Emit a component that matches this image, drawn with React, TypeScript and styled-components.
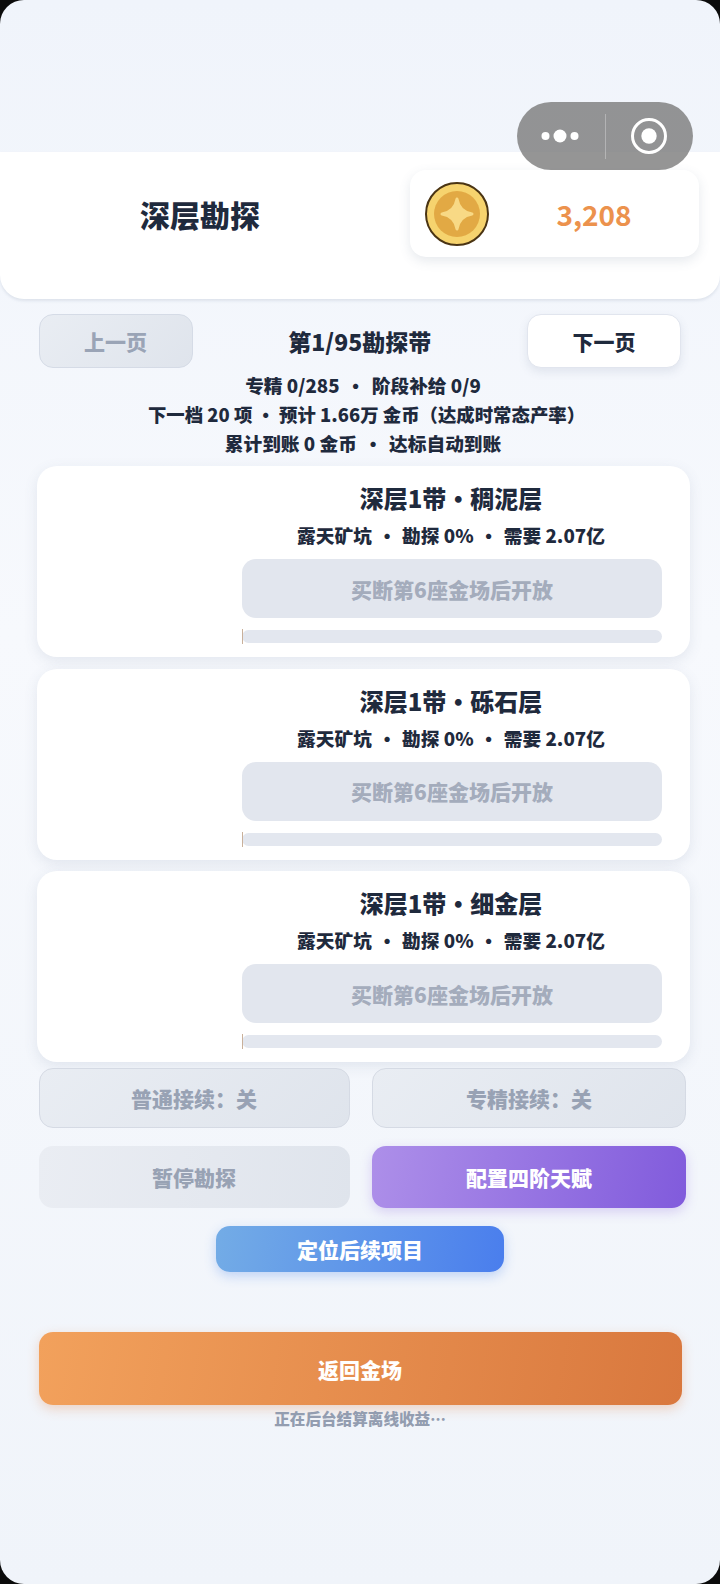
import styled, { createGlobalStyle } from 'styled-components'

const Global = createGlobalStyle`
  html, body { margin: 0; padding: 0; background: #0b0b0b; }
  * { box-sizing: border-box; }
`

const Screen = styled.div`
  position: relative;
  width: 720px;
  height: 1584px;
  overflow: hidden;
  border-radius: 24px;
  background: linear-gradient(180deg, #f0f4fb 0%, #f7f9fd 40%, #f0f4fa 100%);
  font-family: "Noto Sans CJK SC", "Noto Sans", sans-serif;
  font-weight: 900;
  color: #1f2a3d;
  padding-top: 152px;
`

const Capsule = styled.div`
  position: absolute;
  left: 517px;
  top: 102px;
  width: 176px;
  height: 68px;
  border-radius: 34px;
  background: rgba(122, 122, 122, 0.8);
  display: flex;
  align-items: center;
  z-index: 2;
`

const CapsuleSide = styled.div`
  flex: 1;
  height: 100%;
  display: flex;
  align-items: center;
  justify-content: center;
`

const CapsuleLine = styled.div`
  width: 1px;
  height: 45px;
  background: rgba(255, 255, 255, 0.3);
`

const Header = styled.header`
  height: 147px;
  background: #ffffff;
  border-radius: 0 0 24px 24px;
  box-shadow: 0 2px 3px rgba(90, 110, 140, 0.14);
  display: flex;
  padding: 18px 21px 0 0;
`

const Title = styled.h1`
  margin: 0;
  width: 400px;
  height: 88px;
  font-size: 30px;
  font-weight: 900;
  line-height: 88px;
  text-align: center;
`

const CoinPanel = styled.div`
  width: 289px;
  height: 87px;
  margin-left: 10px;
  border-radius: 16px;
  background: #fff;
  box-shadow: 0 4px 12px rgba(80, 100, 130, 0.14);
  display: flex;
  align-items: center;
  padding-left: 15px;
`

const Amount = styled.div`
  flex: 1;
  text-align: center;
  font-size: 28px;
  font-weight: 700;
  color: #ec924d;
`

const Content = styled.main`
  padding: 15px 30px 0 37px;
`

const Pager = styled.div`
  display: flex;
  align-items: center;
  justify-content: space-between;
  padding: 0 9px 0 1.5px;
`

const PageButton = styled.div<{ $off?: boolean }>`
  width: 154px;
  height: 54px;
  border-radius: 14px;
  font-size: 21px;
  display: flex;
  align-items: center;
  justify-content: center;
  border: 1px solid ${p => (p.$off ? '#d5dbe6' : '#e1e5ee')};
  color: ${p => (p.$off ? '#9aa4b6' : '#1f2a3d')};
  background: ${p => (p.$off ? 'linear-gradient(135deg, #e9edf3, #dfe4ec)' : '#fff')};
  box-shadow: ${p => (p.$off ? 'none' : '0 4px 10px rgba(80, 100, 130, 0.12)')};
`

const PageLabel = styled.div`
  font-size: 23px;
`

const Stats = styled.div`
  margin-top: 2px;
  padding-right: 1px;
  text-align: center;
  font-size: 18.7px;
  line-height: 29px;
  white-space: pre;
`

const TightLine = styled.span`
  font-size: 18.4px;
  line-height: 1;
  margin-left: 7px;
`

const Sep = styled.span<{ $gap: number }>`
  margin: 0 ${p => p.$gap}px;
`

const Card = styled.section`
  margin-top: 9px;
  height: 191px;
  border-radius: 20px;
  background: #fff;
  box-shadow: 0 4px 14px rgba(80, 100, 130, 0.12);
  display: flex;
  flex-direction: column;
  align-items: flex-end;
  padding: 13px 28px 0 0;
  & + & {
    margin-top: 11.5px;
  }
`

const CardBody = styled.div`
  width: 420px;
  display: flex;
  flex-direction: column;
  align-items: center;
`

const CardTitle = styled.div`
  font-size: 24px;
  line-height: 38px;
  padding-right: 2px;
`

const CardInfo = styled.div`
  font-size: 18.7px;
  line-height: 30px;
  margin-top: 3px;
  padding-right: 2px;
  white-space: pre;
`

const LockedButton = styled.div`
  width: 100%;
  height: 59px;
  margin-top: 9px;
  border-radius: 14px;
  background: #e2e6ee;
  color: #a4acbc;
  font-size: 21px;
  display: flex;
  align-items: center;
  justify-content: center;
`

const Track = styled.div`
  width: 100%;
  height: 13px;
  margin-top: 12px;
  border-radius: 7px;
  background: #e3e7ef;
  display: flex;
  align-items: center;
`

const TrackFill = styled.div`
  width: 1px;
  height: 15px;
  background: #c9b09a;
`

const Grid = styled.div<{ $top: number }>`
  display: grid;
  grid-template-columns: 311px 314px;
  column-gap: 22.5px;
  padding-left: 1.5px;
  margin-top: ${p => p.$top}px;
`

const Toggle = styled.div`
  height: 60px;
  border-radius: 14px;
  border: 1px solid #d5dae4;
  background: linear-gradient(135deg, #e9edf3, #dfe4ec);
  color: #98a2b4;
  font-size: 21px;
  display: flex;
  align-items: center;
  justify-content: center;
`

const Action = styled.div<{ $from: string; $to: string; $glow: string; $light?: boolean }>`
  height: 62px;
  border-radius: 14px;
  background: linear-gradient(100deg, ${p => p.$from}, ${p => p.$to});
  color: ${p => (p.$light ? '#fff' : '#98a2b4')};
  box-shadow: 0 4px 12px ${p => p.$glow};
  font-size: 21px;
  display: flex;
  align-items: center;
  justify-content: center;
`

const Locate = styled(Action)`
  width: 288px;
  height: 46px;
  margin: 18px 0 0 179px;
`

const Back = styled(Action)`
  width: 643px;
  height: 73px;
  margin: 60px 0 0 1.5px;
`

const Note = styled.div`
  margin-top: 2px;
  padding-right: 7px;
  text-align: center;
  color: #939db0;
  font-size: 15.6px;
  line-height: 22px;
`

const Coin = () => (
  <svg width="64" height="64" viewBox="0 0 64 64">
    <circle cx="32" cy="32" r="31" fill="#f6d36e" stroke="#4a3413" strokeWidth="2" />
    <circle cx="32" cy="32" r="23" fill="#e2a944" />
    <path d="M32 17C33.5 26 38 30.5 47 32C38 33.5 33.5 38 32 47C30.5 38 26 33.5 17 32C26 30.5 30.5 26 32 17Z" fill="#f8d985" stroke="#f8d985" strokeWidth="3" strokeLinejoin="round" />
  </svg>
)

const Dots = () => (
  <svg width="42" height="16" viewBox="0 0 42 16">
    <circle cx="5.5" cy="8" r="4" fill="#fff" />
    <circle cx="20" cy="8" r="6.5" fill="#fff" />
    <circle cx="34.5" cy="8" r="4" fill="#fff" />
  </svg>
)

const Target = () => (
  <svg width="38" height="38" viewBox="0 0 38 38">
    <circle cx="19" cy="19" r="16.5" fill="none" stroke="#fff" strokeWidth="3" />
    <circle cx="19" cy="19" r="7.7" fill="#fff" />
  </svg>
)

const layers = ['稠泥层', '砾石层', '细金层']

export default function App() {
  return (
    <Screen>
      <Global />
      <Capsule>
        <CapsuleSide><Dots /></CapsuleSide>
        <CapsuleLine />
        <CapsuleSide><Target /></CapsuleSide>
      </Capsule>
      <Header>
        <Title>深层勘探</Title>
        <CoinPanel>
          <Coin />
          <Amount>3,208</Amount>
        </CoinPanel>
      </Header>
      <Content>
        <Pager>
          <PageButton $off>上一页</PageButton>
          <PageLabel>第1/95勘探带</PageLabel>
          <PageButton>下一页</PageButton>
        </Pager>
        <Stats>
          专精 0/285 <Sep $gap={2.5}>・</Sep> 阶段补给 0/9{'\n'}
          <TightLine>下一档 20 项 ・ 预计 1.66万 金币（达成时常态产率）</TightLine>{'\n'}
          累计到账 0 金币 <Sep $gap={2.5}>・</Sep> 达标自动到账
        </Stats>
        {layers.map(name => (
          <Card key={name}>
            <CardBody>
              <CardTitle>深层1带·{name}</CardTitle>
              <CardInfo>露天矿坑 <Sep $gap={1.5}>・</Sep> 勘探 0% <Sep $gap={1.5}>・</Sep> 需要 2.07亿</CardInfo>
              <LockedButton>买断第6座金场后开放</LockedButton>
              <Track><TrackFill /></Track>
            </CardBody>
          </Card>
        ))}
        <Grid $top={6}>
          <Toggle>普通接续：关</Toggle>
          <Toggle>专精接续：关</Toggle>
        </Grid>
        <Grid $top={18}>
          <Action $from="#eaedf3" $to="#dfe4ec" $glow="transparent">暂停勘探</Action>
          <Action $from="#ad8fe9" $to="#815bdc" $glow="rgba(130, 90, 220, 0.25)" $light>配置四阶天赋</Action>
        </Grid>
        <Locate $from="#73ace6" $to="#4a7eed" $glow="rgba(70, 130, 235, 0.3)" $light>定位后续项目</Locate>
        <Back $from="#f2a15c" $to="#d9783e" $glow="rgba(225, 130, 70, 0.3)" $light>返回金场</Back>
        <Note>正在后台结算离线收益…</Note>
      </Content>
    </Screen>
  )
}
